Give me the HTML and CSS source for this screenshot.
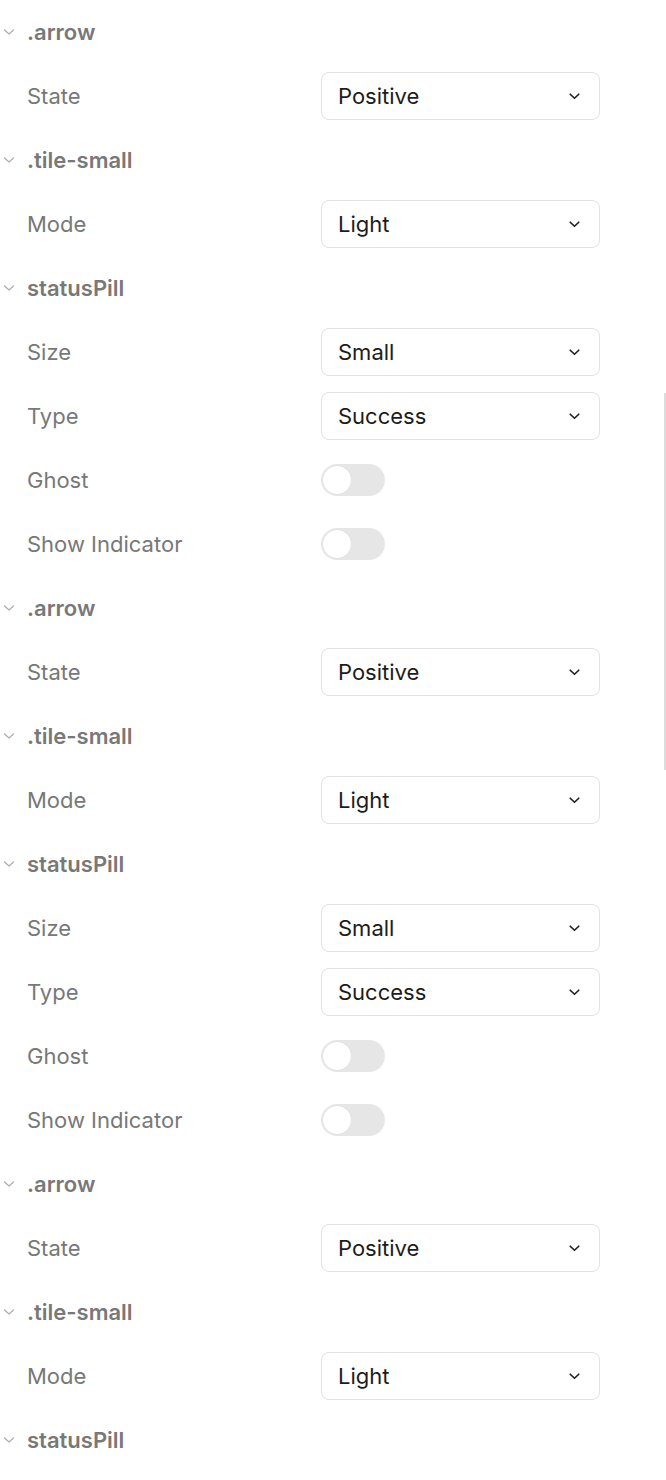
FILE: index.html
```html
<!DOCTYPE html>
<html>
<head>
<meta charset="utf-8">
<link rel="stylesheet" href="styles.css">
</head>
<body>
<div class="panel">
  <div class="group-head"><svg class="caret" viewBox="0 0 12 8"><path d="M1.5 2 L6 6 L10.5 2"/></svg><span>.arrow</span></div>
  <div class="prop"><span class="label">State</span><div class="select"><span>Positive</span><svg class="chev" viewBox="0 0 11 7"><path d="M1.25 1.25 L5.5 5.25 L9.75 1.25"/></svg></div></div>
  <div class="group-head"><svg class="caret" viewBox="0 0 12 8"><path d="M1.5 2 L6 6 L10.5 2"/></svg><span>.tile-small</span></div>
  <div class="prop"><span class="label">Mode</span><div class="select"><span>Light</span><svg class="chev" viewBox="0 0 11 7"><path d="M1.25 1.25 L5.5 5.25 L9.75 1.25"/></svg></div></div>
  <div class="group-head"><svg class="caret" viewBox="0 0 12 8"><path d="M1.5 2 L6 6 L10.5 2"/></svg><span>statusPill</span></div>
  <div class="prop"><span class="label">Size</span><div class="select"><span>Small</span><svg class="chev" viewBox="0 0 11 7"><path d="M1.25 1.25 L5.5 5.25 L9.75 1.25"/></svg></div></div>
  <div class="prop"><span class="label">Type</span><div class="select"><span>Success</span><svg class="chev" viewBox="0 0 11 7"><path d="M1.25 1.25 L5.5 5.25 L9.75 1.25"/></svg></div></div>
  <div class="prop"><span class="label">Ghost</span><div class="toggle"><div class="knob"></div></div></div>
  <div class="prop"><span class="label">Show Indicator</span><div class="toggle"><div class="knob"></div></div></div>

  <div class="group-head"><svg class="caret" viewBox="0 0 12 8"><path d="M1.5 2 L6 6 L10.5 2"/></svg><span>.arrow</span></div>
  <div class="prop"><span class="label">State</span><div class="select"><span>Positive</span><svg class="chev" viewBox="0 0 11 7"><path d="M1.25 1.25 L5.5 5.25 L9.75 1.25"/></svg></div></div>
  <div class="group-head"><svg class="caret" viewBox="0 0 12 8"><path d="M1.5 2 L6 6 L10.5 2"/></svg><span>.tile-small</span></div>
  <div class="prop"><span class="label">Mode</span><div class="select"><span>Light</span><svg class="chev" viewBox="0 0 11 7"><path d="M1.25 1.25 L5.5 5.25 L9.75 1.25"/></svg></div></div>
  <div class="group-head"><svg class="caret" viewBox="0 0 12 8"><path d="M1.5 2 L6 6 L10.5 2"/></svg><span>statusPill</span></div>
  <div class="prop"><span class="label">Size</span><div class="select"><span>Small</span><svg class="chev" viewBox="0 0 11 7"><path d="M1.25 1.25 L5.5 5.25 L9.75 1.25"/></svg></div></div>
  <div class="prop"><span class="label">Type</span><div class="select"><span>Success</span><svg class="chev" viewBox="0 0 11 7"><path d="M1.25 1.25 L5.5 5.25 L9.75 1.25"/></svg></div></div>
  <div class="prop"><span class="label">Ghost</span><div class="toggle"><div class="knob"></div></div></div>
  <div class="prop"><span class="label">Show Indicator</span><div class="toggle"><div class="knob"></div></div></div>

  <div class="group-head"><svg class="caret" viewBox="0 0 12 8"><path d="M1.5 2 L6 6 L10.5 2"/></svg><span>.arrow</span></div>
  <div class="prop"><span class="label">State</span><div class="select"><span>Positive</span><svg class="chev" viewBox="0 0 11 7"><path d="M1.25 1.25 L5.5 5.25 L9.75 1.25"/></svg></div></div>
  <div class="group-head"><svg class="caret" viewBox="0 0 12 8"><path d="M1.5 2 L6 6 L10.5 2"/></svg><span>.tile-small</span></div>
  <div class="prop"><span class="label">Mode</span><div class="select"><span>Light</span><svg class="chev" viewBox="0 0 11 7"><path d="M1.25 1.25 L5.5 5.25 L9.75 1.25"/></svg></div></div>
  <div class="group-head"><svg class="caret" viewBox="0 0 12 8"><path d="M1.5 2 L6 6 L10.5 2"/></svg><span>statusPill</span></div>
</div>
<div class="scrollbar"></div>
</body>
</html>
```

FILE: styles.css
```css
html, body {
  margin: 0;
  padding: 0;
  background: #ffffff;
}
body {
  font-family: Inter, "Noto Sans", sans-serif;
  width: 666px;
  height: 1480px;
  overflow: hidden;
  position: relative;
}
.panel {
  display: flex;
  flex-direction: column;
}
.group-head {
  height: 64px;
  display: flex;
  align-items: center;
  font-size: 22px;
  font-weight: 600;
  color: #787878;
}
.caret {
  width: 12px;
  height: 8px;
  margin-left: 3px;
  margin-right: 12px;
  fill: none;
  stroke: #b0b0b0;
  stroke-width: 1.4;
  stroke-linecap: round;
  stroke-linejoin: round;
}
.prop {
  height: 64px;
  display: flex;
  align-items: center;
  padding-left: 27px;
}
.label {
  width: 294px;
  font-size: 22px;
  color: #787878;
}
.select {
  box-sizing: border-box;
  width: 279px;
  height: 48px;
  border: 1.5px solid #e2e2e2;
  border-radius: 8px;
  display: flex;
  align-items: center;
  justify-content: space-between;
  padding: 0 19px 0 16px;
  font-size: 22px;
  color: #1c1c1c;
}
.chev {
  width: 11px;
  height: 7px;
  fill: none;
  stroke: #222;
  stroke-width: 1.7;
  stroke-linecap: round;
  stroke-linejoin: round;
}
.toggle {
  box-sizing: border-box;
  width: 64px;
  height: 32px;
  border-radius: 16px;
  background: #e6e6e6;
  padding: 1px;
  display: flex;
  align-items: center;
}
.knob {
  box-sizing: border-box;
  width: 30px;
  height: 30px;
  border-radius: 50%;
  background: #ffffff;
  border: 1.5px solid #e2e2e2;
}
.scrollbar {
  position: absolute;
  right: 0;
  top: 393px;
  width: 2px;
  height: 377px;
  background: #dcdcdc;
}
```
